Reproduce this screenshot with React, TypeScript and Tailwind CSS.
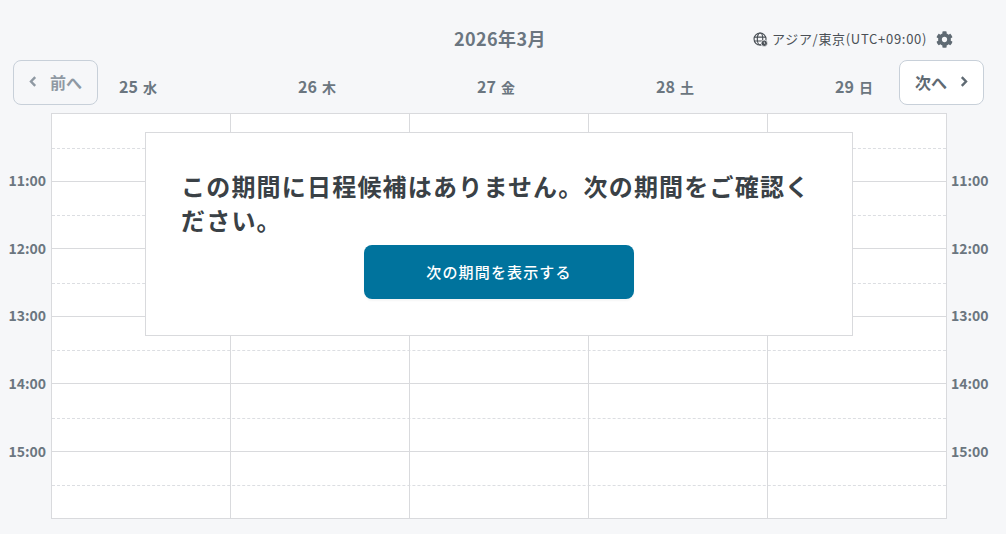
import { FaCog } from "react-icons/fa";

const DAYS = [
  { num: "25", label: "水" },
  { num: "26", label: "木" },
  { num: "27", label: "金" },
  { num: "28", label: "土" },
  { num: "29", label: "日" },
];

const ROWS = [
  { h: "h-[35px]", border: "border-b border-dashed border-b-[#dcdee2]" },
  { h: "h-[33px]", border: "border-b border-solid border-b-[#d9dadd]" },
  { h: "h-[34px]", border: "border-b border-dashed border-b-[#dcdee2]" },
  { h: "h-[33px]", border: "border-b border-solid border-b-[#d9dadd]" },
  { h: "h-[35px]", border: "border-b border-dashed border-b-[#dcdee2]" },
  { h: "h-[33px]", border: "border-b border-solid border-b-[#d9dadd]" },
  { h: "h-[34px]", border: "border-b border-dashed border-b-[#dcdee2]" },
  { h: "h-[33px]", border: "border-b border-solid border-b-[#d9dadd]" },
  { h: "h-[35px]", border: "border-b border-dashed border-b-[#dcdee2]" },
  { h: "h-[33px]", border: "border-b border-solid border-b-[#d9dadd]" },
  { h: "h-[34px]", border: "border-b border-dashed border-b-[#dcdee2]" },
  { h: "h-[32px]", border: "" },
];

const HOURS = ["11:00", "12:00", "13:00", "14:00", "15:00"];

function TimeGutter({ side }: { side: "left" | "right" }) {
  return (
    <div className={`flex flex-col pt-[33px] ${side === "left" ? "w-[51px] items-end pr-[5px]" : "w-[59px] items-start pl-[4px]"}`}>
      {HOURS.map((t) => (
        <div key={t} className="h-[67.75px] flex items-center text-[14px] font-bold text-[#6b7680] leading-none">
          {t}
        </div>
      ))}
    </div>
  );
}

function GlobeClock() {
  return (
    <svg width="15" height="15" viewBox="0 0 16 16" fill="none" stroke="#4a5056" strokeWidth="1.2">
      <circle cx="7.5" cy="7.5" r="6.4" />
      <ellipse cx="7.5" cy="7.5" rx="2.9" ry="6.4" />
      <path d="M1.3 5.4h12.4M1.3 9.6h12.4" />
      <circle cx="12" cy="12" r="3.4" fill="#4a5056" stroke="#f6f7f9" strokeWidth="0.8" />
      <path d="M12 10.4V12l1.1.7" stroke="#f6f7f9" strokeWidth="0.8" />
    </svg>
  );
}

function Chevron({ dir, className }: { dir: "left" | "right"; className?: string }) {
  return (
    <svg width="8" height="11" viewBox="0 0 8 11" fill="none" stroke="currentColor" strokeWidth="2.4" className={className}>
      <path d={dir === "left" ? "M6.2 1.2 2 5.5l4.2 4.3" : "M1.8 1.2 6 5.5 1.8 9.8"} />
    </svg>
  );
}

export default function App() {
  return (
    <div className="relative w-[1006px] h-[534px] overflow-hidden bg-[#f6f7f9] text-[#3a4146] font-['Noto_Sans_CJK_JP','Noto_Sans',sans-serif]">
      {/* Title + timezone */}
      <div className="h-[60px] pt-[25px] flex items-start">
        <div className="w-[753px] pl-[454px] text-[18px] font-bold leading-[26px] tracking-[0.4px] text-[#6b7680] whitespace-nowrap">2026年3月</div>
        <div className="flex items-center h-[28px] text-[13px] tracking-[0.7px] text-[#4a5056] whitespace-nowrap">
          <GlobeClock />
          <span className="ml-[4px]">アジア/東京(UTC+09:00)</span>
          <FaCog className="ml-[9px] text-[17px] text-[#5f6a73]" />
        </div>
      </div>

      {/* Nav + days */}
      <div className="relative h-[53px] pl-[51px] flex">
        {DAYS.map((d) => (
          <div key={d.num} className="w-[179px] pl-[68px] pt-[16px] text-[#6b7680] font-bold leading-[20px] whitespace-nowrap">
            <span className="text-[16px]">{d.num}</span>
            <span className="text-[14px] ml-[5px]">{d.label}</span>
          </div>
        ))}
        <button className="absolute left-[13px] top-0 w-[85px] h-[45px] rounded-lg border border-[#c8d0d9] bg-[#f6f7f9] text-[#8f99a3] text-[16px] font-bold flex items-center pl-[15px] pb-[2px]">
          <Chevron dir="left" />
          <span className="ml-[13px]">前へ</span>
        </button>
        <button className="absolute left-[899px] top-0 w-[85px] h-[45px] rounded-lg border border-[#c8d0d9] bg-white text-[#5f6a73] text-[16px] font-bold flex items-center pl-[15px] pb-[2px]">
          <span>次へ</span>
          <Chevron dir="right" className="ml-[13px]" />
        </button>
      </div>

      {/* Calendar grid */}
      <div className="flex">
        <TimeGutter side="left" />
        <div className="w-[896px] h-[406px] bg-white border border-[#d9dadd]">
          {ROWS.map((r, i) => (
            <div key={i} className={`${r.h} ${r.border} grid grid-cols-[179px_179px_179px_179px_1fr]`}>
              {[0, 1, 2, 3].map((c) => (
                <div key={c} className="border-r border-[#d9dadd] -mb-px" />
              ))}
            </div>
          ))}
        </div>
        <TimeGutter side="right" />
      </div>

      {/* Empty-state card */}
      <div className="absolute left-[145px] top-[132px] w-[708px] h-[204px] bg-white border border-[#d9dadd] pt-[36px] px-[35px] flex flex-col items-center">
        <p className="w-full text-[24px] font-bold leading-[34px] tracking-[1.2px] text-[#3a4146]">
          この期間に日程候補はありません。次の期間をご確認ください。
        </p>
        <button className="mt-[8px] w-[270px] h-[54px] rounded-lg bg-[#00739d] text-white text-[15px] tracking-[1.15px] font-medium shadow-[0_2px_2px_rgba(0,0,0,0.04)]">
          次の期間を表示する
        </button>
      </div>
    </div>
  );
}
